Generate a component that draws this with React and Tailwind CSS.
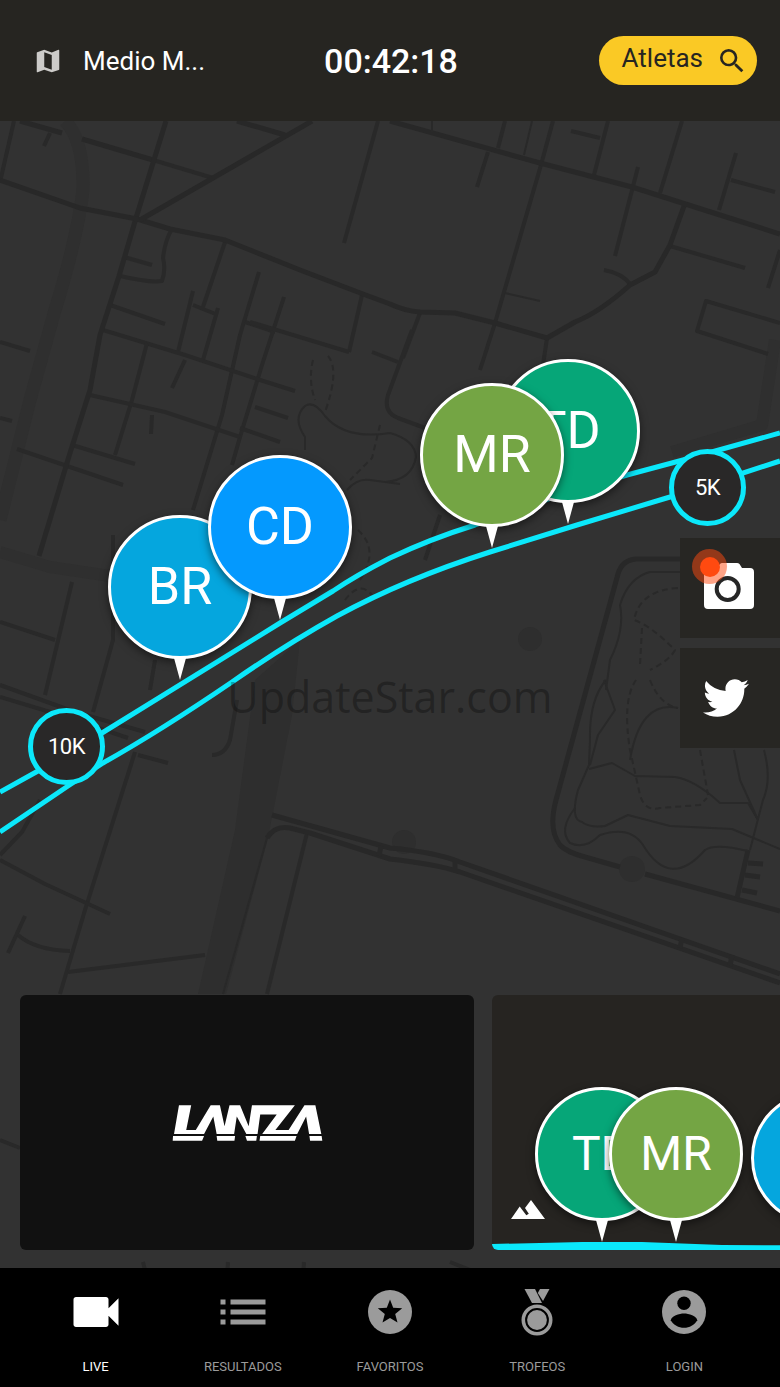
import React from "react";
import { MdMap, MdSearch, MdVideocam, MdList } from "react-icons/md";
import { FaTwitter } from "react-icons/fa";

const STREETS = [
  "M14 121 L0 182",
  "M50 133 L44 146",
  "M153 160 L213 178",
  "M378 121 L344 243",
  "M124 257 L152 265",
  "M120 276 Q150 283 162 281 Q166 270 163 258 Q165 240 172 229",
  "M110 305 L165 324",
  "M225 242 L203 307",
  "M193 291 L178 352",
  "M193 305 L218 315 M218 308 L203 360",
  "M259 272 L240 335 L222 415 L193 510",
  "M245 322 L275 332",
  "M284 297 L262 365 L240 437 L232 465",
  "M362 295 L349 352",
  "M103 330 L185 355 L260 380 L295 391",
  "M250 322 L349 352",
  "M147 343 L132 400 L115 455",
  "M185 360 L172 388",
  "M90 395 L165 412 L240 437",
  "M240 428 L280 442",
  "M152 415 L151 434",
  "M255 407 L288 418",
  "M72 445 L135 464",
  "M17 449 L123 485",
  "M0 342 L30 351",
  "M0 418 L12 421",
  "M0 622 L55 640",
  "M72 582 L45 695",
  "M113 535 L113 640 L93 712",
  "M0 685 L75 712 L145 732",
  "M0 697 L60 715 L128 738",
  "M135 752 L85 910 L60 994",
  "M138 755 L168 763",
  "M155 660 L150 690",
  "M237 700 L230 740 Q225 755 212 755",
  "M40 800 L22 832 L0 855",
  "M0 860 L45 884 L110 914",
  "M25 916 L8 953",
  "M18 935 Q35 950 70 951",
  "M68 972 L205 955",
  "M307 833 L267 994",
  "M505 121 L498 148",
  "M488 152 L477 187",
  "M553 121 L541 165 L495 323 L480 370",
  "M608 121 L594 175",
  "M571 131 L600 138",
  "M638 167 L615 256",
  "M682 121 L660 193",
  "M736 153 L719 210",
  "M731 180 L775 192",
  "M670 246 L745 268",
  "M604 270 Q622 273 631 285",
  "M780 250 L768 288",
  "M780 323 L706 301 L697 331 L768 354",
  "M420 313 L403 358",
  "M547 338 L543 365",
  "M412 330 L388 395 Q383 412 398 418 L425 428",
  "M372 352 L398 362",
  "M440 515 L425 560",
  "M0 1140 L20 1148",
  "M143 1262 L150 1290 M228 1262 L226 1290 M304 1262 L302 1290 M450 1262 L470 1270",
];

const AVENUES = [
  "M20 121 L62 133 M82 139 L153 160",
  "M166 121 L136 218 L119 276 L100 335 L90 390 L70 453 L39 556",
  "M0 180 L80 208 L137 219 L170 229 L225 240 L300 270 L363 294 L390 304 Q405 311 420 312 L455 313 L495 323 L547 338 L575 322 Q600 312 630 285 L655 272 L670 245 L684 206",
  "M237 121 L285 135 M312 121 L213 178 L140 220",
  "M390 121 L540 163 L632 187 L720 215 L780 234",
  "M272 815 L390 848 Q435 852 460 862 L780 974",
  "M267 838 Q275 825 290 828 L310 833 L390 859 Q435 864 460 872 L780 983",
  "M455 862 L455 870 M682 938 L680 948 M732 955 L730 966 M381 846 L379 856",
];

const PATHS = [
  "M267 838 L223 994",
  "M524 155 L532 121 M505 293 L540 301 M432 121 L432 132",
  "M305 450 L305 437 Q292 418 305 406 Q314 400 325 416 Q345 440 390 433",
  "M347 490 Q357 478 370 480 L400 484",
  "M390 433 Q415 440 416 457 Q412 480 385 482",
  "M606 680 Q589 700 590 740 L589 765 L578 790 Q570 820 582 822 Q590 828 605 826 L628 815 L670 826 L732 829 L780 849",
  "M575 808 Q558 830 570 843 Q585 850 600 835 Q630 825 643 845 Q670 890 705 850 Q715 843 748 851",
  "M589 769 L612 763 L635 776 L675 777 Q695 780 720 803 L748 803 L758 820",
  "M604 680 L615 710 L598 735 L590 765",
  "M734 750 L740 780 L758 820 M764 750 Q772 780 763 800 L750 850",
  "M680 572 L650 572 Q628 578 620 605 Q625 630 610 660 L606 690",
  "M678 708 Q640 700 630 760",
];

const TRAILS = [
  "M313 360 Q308 380 315 400 M328 356 Q340 370 325 412",
  "M380 425 L372 458 L350 480",
  "M358 530 Q380 550 360 580 M345 600 Q360 580 372 595",
  "M636 680 Q622 700 630 750 L640 795 Q645 812 660 808 L700 805 L707 798",
  "M650 680 Q660 705 678 708 M678 588 Q640 590 634 620 Q650 625 675 650 Q670 660 650 670",
  "M642 628 L640 665 M700 750 L708 795",
];

function StreetMap() {
  return (
    <svg
      className="absolute inset-0 size-full"
      viewBox="0 121 780 1147"
      preserveAspectRatio="xMinYMin slice"
      fill="none"
      strokeLinejoin="round"
      aria-hidden="true"
    >
      <g stroke="#2f2f2f">
        <path strokeWidth="13" d="M65 121 Q84 140 83 190 Q78 235 55 310 L30 400 L0 520" />
        <path strokeWidth="12" d="M0 552 L50 567 L110 576 M775 340 L762 425 L672 452" />
      </g>
      <path fill="#2e2e2e" d="M255 680 L300 640 L292 715 L268 838 L226 994 L198 994 L235 830 Z" />
      <g fill="#2e2e2e">
        <circle cx="530" cy="639" r="12" />
        <circle cx="632" cy="869" r="13" />
        <circle cx="404" cy="842" r="12" />
      </g>
      <g stroke="#292929" strokeWidth="4">
        {STREETS.map((d) => <path key={d} d={d} />)}
      </g>
      <g stroke="#282828" strokeWidth="5">
        {AVENUES.map((d) => <path key={d} d={d} />)}
        <path d="M690 559 L636 559 Q622 560 618 574 L556 800 Q548 830 560 845 Q566 852 585 857 L620 867 M645 874 L780 911" />
        <path d="M748 850 L737 898 M748 863 L763 864 M745 875 L760 877 M742 890 L757 893" />
      </g>
      <g stroke="#292929" strokeWidth="2">
        {PATHS.map((d) => <path key={d} d={d} />)}
      </g>
      <g stroke="#292929" strokeWidth="2" strokeDasharray="6 4">
        {TRAILS.map((d) => <path key={d} d={d} />)}
      </g>
      <g stroke="#0be8fb" strokeWidth="5">
        <path d="M0 792 L38 771 L102 733 L280 623 L333 591 Q355 576 390 558 Q430 539 475 525 L560 495 L627 475 L683 460 L780 433" />
        <path d="M0 832 L68 786 L103 763 Q160 731 232 682 Q285 645 337 616 Q405 579 490 552 L577 525 L670 497 L780 461" />
      </g>
    </svg>
  );
}

function Pin({ initials, place, color, small }) {
  return (
    <button type="button" className={`absolute flex flex-col items-center ${place}`}>
      <span
        className={`flex items-center justify-center rounded-full border-3 border-white text-white shadow-[0_3px_8px_rgba(0,0,0,0.5)] ${
          small ? "size-[134px] text-[48px]" : "size-36 text-[52px]"
        } ${color}`}
      >
        {initials}
      </span>
      <svg className="relative -mt-px h-[22px] w-3" viewBox="0 0 12 22" fill="#fff" aria-hidden="true">
        <path d="M0 0 H12 L6 22 Z" />
      </svg>
    </button>
  );
}

function Milestone({ label, place }) {
  return (
    <span
      className={`absolute flex size-[77px] items-center justify-center rounded-full border-5 border-[#0be8fb] bg-[#292828] text-[22px] tracking-tight text-white ${place}`}
    >
      {label}
    </span>
  );
}

function CameraIcon() {
  return (
    <svg className="h-[46px] w-[50px]" viewBox="0 0 50 46" aria-hidden="true">
      <path
        fill="#fff"
        d="M4 5 H13 L16 1 Q17 0 18 0 H33 Q34.500 0 35.500 1 L38 5 H46 Q50 5 50 9 V42 Q50 46 46 46 H4 Q0 46 0 42 V9 Q0 5 4 5 Z"
      />
      <circle cx="23.700" cy="26" r="11" fill="#fff" stroke="#262626" strokeWidth="4" />
    </svg>
  );
}

function MountainIcon() {
  return (
    <svg className="absolute bottom-[31px] left-[19px] h-[19px] w-[34px]" viewBox="0 0 34 19" fill="#fff" aria-hidden="true">
      <path d="M0 19 L8.700 6.500 L15.300 15.300 L17.800 13.700 L14 8 L20 0 L34 19 Z" />
    </svg>
  );
}

function StarIcon() {
  return (
    <svg className="size-11" viewBox="0 0 44 44" aria-hidden="true">
      <circle cx="22" cy="22" r="22" fill="#9b9b9b" />
      <path
        fill="#000"
        d="M22 9.500 L25.200 17.700 L34.200 18.300 L27.200 24 L29.500 32.600 L22 27.900 L14.500 32.600 L16.800 24 L9.800 18.300 L18.800 17.700 Z"
      />
    </svg>
  );
}

function MedalIcon() {
  return (
    <svg className="h-[47px] w-8" viewBox="0 0 32 47" fill="#9b9b9b" aria-hidden="true">
      <path d="M3.500 0 H14 L21 14 H11 Z" />
      <path d="M19 0 H28.500 L22 12 L16.800 4 Z" />
      <circle cx="16" cy="31" r="13.700" fill="none" stroke="#9b9b9b" strokeWidth="3.600" />
      <circle cx="16" cy="31" r="9.900" />
    </svg>
  );
}

function AccountIcon() {
  return (
    <svg className="size-11" viewBox="0 0 44 44" aria-hidden="true">
      <circle cx="22" cy="22" r="22" fill="#9b9b9b" />
      <circle cx="22" cy="13.200" r="6.700" fill="#000" />
      <path fill="#000" d="M8.800 30.200 C9 25.800 17.500 23.400 22 23.400 C26.500 23.400 35 25.800 35.200 30.200 C32.500 35 27.500 37.800 22 37.800 C16.500 37.800 11.500 35 8.800 30.200 Z" />
    </svg>
  );
}

const TABS = [
  { label: "LIVE", icon: <MdVideocam size={60} />, active: true },
  { label: "RESULTADOS", icon: <MdList size={60} /> },
  { label: "FAVORITOS", icon: <StarIcon /> },
  { label: "TROFEOS", icon: <MedalIcon /> },
  { label: "LOGIN", icon: <AccountIcon /> },
];

export default function App() {
  return (
    <div className="flex min-h-screen flex-col overflow-hidden bg-[#323232] font-['Roboto',sans-serif]">
      <header className="grid grid-cols-[1fr_auto_1fr] items-center bg-[#262521] py-9 pr-[23px] pl-[25px] text-white">
        <button type="button" className="ml-2 flex items-center gap-5 text-[26px] leading-10">
          <MdMap size={30} className="text-[#cccbc9]" />
          <span>Medio M...</span>
        </button>
        <time className="text-[34px] leading-10 font-medium">00:42:18</time>
        <button
          type="button"
          className="flex h-[49px] items-center gap-[13px] justify-self-end rounded-full bg-[#fac925] pr-[9px] pl-[23px] text-[26px] text-[#262521]"
        >
          <span className="pb-1">Atletas</span>
          <MdSearch size={32} />
        </button>
      </header>

      <main className="relative flex flex-1 flex-col justify-end">
        <StreetMap />
        <Milestone label="10K" place="top-[587px] left-[28px]" />
        <Milestone label="5K" place="top-[328px] left-[669px]" />
        <Pin initials="BR" color="bg-[#05a6de]" place="top-[394px] left-[108px]" />
        <Pin initials="CD" color="bg-[#0499fe]" place="top-[334px] left-[208px]" />
        <Pin initials="TD" color="bg-[#06a678]" place="top-[238px] left-[496px]" />
        <Pin initials="MR" color="bg-[#74a544]" place="top-[262px] left-[420px]" />
        <p className="pointer-events-none absolute inset-x-0 top-[546px] text-center font-['Open_Sans',sans-serif] text-[43px] leading-[60px] text-black/30">
          UpdateStar.com
        </p>

        <div className="absolute top-[417px] right-0 flex flex-col gap-2.5">
          <button type="button" aria-label="Cámara" className="relative flex size-[100px] items-center justify-center bg-[#272623] pr-0.5 pb-1">
            <CameraIcon />
            <span className="absolute top-[11px] left-3 flex size-[35px] items-center justify-center rounded-full bg-[#ff4a10]/50">
              <span className="size-5 rounded-full bg-[#ff4a10]" />
            </span>
          </button>
          <button type="button" aria-label="Twitter" className="flex size-[100px] items-center justify-center bg-[#272623] pr-2 text-white">
            <FaTwitter size={46} />
          </button>
        </div>

        <div className="relative flex gap-[18px] overflow-x-auto px-5 pb-[18px] [scrollbar-width:none]">
          <section className="flex h-[255px] w-[454px] shrink-0 items-center justify-center rounded-md bg-[#111111]">
            <svg className="h-9 w-[151px]" viewBox="95 75 453 109" fill="#fff" role="img" aria-label="Lanza">
              <path d="M114 76 H151 L136 151 H165 L210 76 H238 L252 139 L267 76 H299 L325 139 L335 76 H465 L406 151 H446 L494 76 H527 L545 163 H508 L499 110 L472 163 H366 L410 104 H360 L352 163 H318 L289 110 L281 163 H228 L218 110 L190 163 H99 Z" />
              <path d="M96 169 H190 L184 183 H95 Z M228 169 H284 L282 183 H230 Z M315 169 H350 L348 183 H320 Z M360 169 H470 L465 183 H358 Z M509 169 H546 L548 183 H511 Z" />
            </svg>
          </section>
          <section className="relative h-[255px] w-[454px] shrink-0 overflow-hidden rounded-md bg-[#262421]">
            <svg className="absolute inset-x-0 bottom-0 h-2 w-full" viewBox="0 0 454 8" preserveAspectRatio="none" aria-hidden="true">
              <path fill="#0be8fb" d="M0 2 L90 0 L150 0 L230 3 L454 4 V8 H0 Z" />
            </svg>
            <MountainIcon />
            <Pin small initials="TD" color="bg-[#06a678]" place="top-[92px] left-[43px]" />
            <Pin small initials="MR" color="bg-[#74a544]" place="top-[92px] left-[117px]" />
            <Pin small initials="BR" color="bg-[#05a6de]" place="top-[96px] left-[259px]" />
          </section>
        </div>
      </main>

      <nav className="flex bg-black px-[22px] pt-[14px] pb-2.5">
        {TABS.map(({ label, icon, active }) => (
          <a
            key={label}
            href={`#${label.toLowerCase()}`}
            className={`flex flex-1 basis-0 flex-col items-center gap-[15px] text-[13px] leading-5 ${active ? "text-white" : "text-[#9b9b9b]"}`}
          >
            <span className="flex h-[60px] items-center">{icon}</span>
            <span>{label}</span>
          </a>
        ))}
      </nav>
    </div>
  );
}
